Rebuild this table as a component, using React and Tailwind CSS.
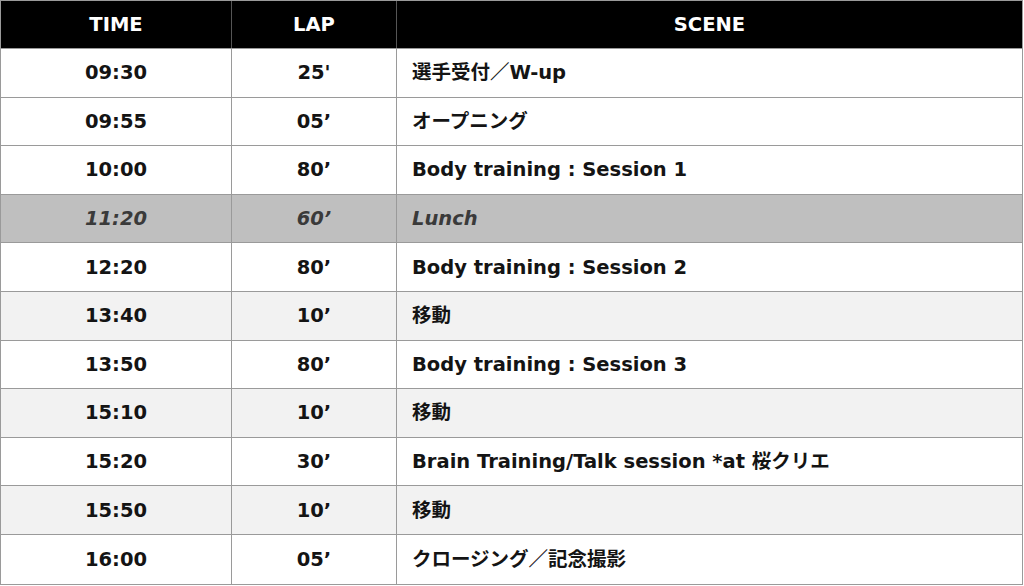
import React from 'react';

const rows = [
  { time: '09:30', lap: "25'", scene: '選手受付／W-up' },
  { time: '09:55', lap: '05’', scene: 'オープニング' },
  { time: '10:00', lap: '80’', scene: 'Body training : Session 1' },
  { time: '11:20', lap: '60’', scene: 'Lunch', lunch: true },
  { time: '12:20', lap: '80’', scene: 'Body training : Session 2' },
  { time: '13:40', lap: '10’', scene: '移動', alt: true },
  { time: '13:50', lap: '80’', scene: 'Body training : Session 3' },
  { time: '15:10', lap: '10’', scene: '移動', alt: true },
  { time: '15:20', lap: '30’', scene: 'Brain Training/Talk session *at 桜クリエ' },
  { time: '15:50', lap: '10’', scene: '移動', alt: true },
  { time: '16:00', lap: '05’', scene: 'クロージング／記念撮影' },
];

const App = () => {
  return (
    <div className="w-[1024px] h-[586px] bg-white font-['DejaVu_Sans','Noto_Sans_CJK_JP',sans-serif] font-bold text-[19.5px] text-[#141414]">
      <div className="w-[1023px] border border-[#9a9a9a]">
        {/* Header */}
        <div className="grid grid-cols-[231px_165px_1fr] h-[48px] bg-black text-white border-b border-[#9a9a9a]">
          <div className="flex items-center justify-center border-r border-[#555]">TIME</div>
          <div className="flex items-center justify-center border-r border-[#555]">LAP</div>
          <div className="flex items-center justify-center">SCENE</div>
        </div>

        {/* Rows */}
        {rows.map((r, i) => (
          <div
            key={i}
            className={`grid grid-cols-[231px_165px_1fr] h-[48.6px] ${i < rows.length - 1 ? 'border-b border-[#9a9a9a]' : ''} ${
              r.lunch ? 'bg-[#bfbfbf] italic text-[#3a3a3a]' : r.alt ? 'bg-[#f2f2f2]' : 'bg-white'
            }`}
          >
            <div className="flex items-center justify-center border-r border-[#9a9a9a]">{r.time}</div>
            <div className="flex items-center justify-center border-r border-[#9a9a9a]">{r.lap}</div>
            <div className="flex items-center pl-[15px]">{r.scene}</div>
          </div>
        ))}
      </div>
    </div>
  );
};

export default App;
